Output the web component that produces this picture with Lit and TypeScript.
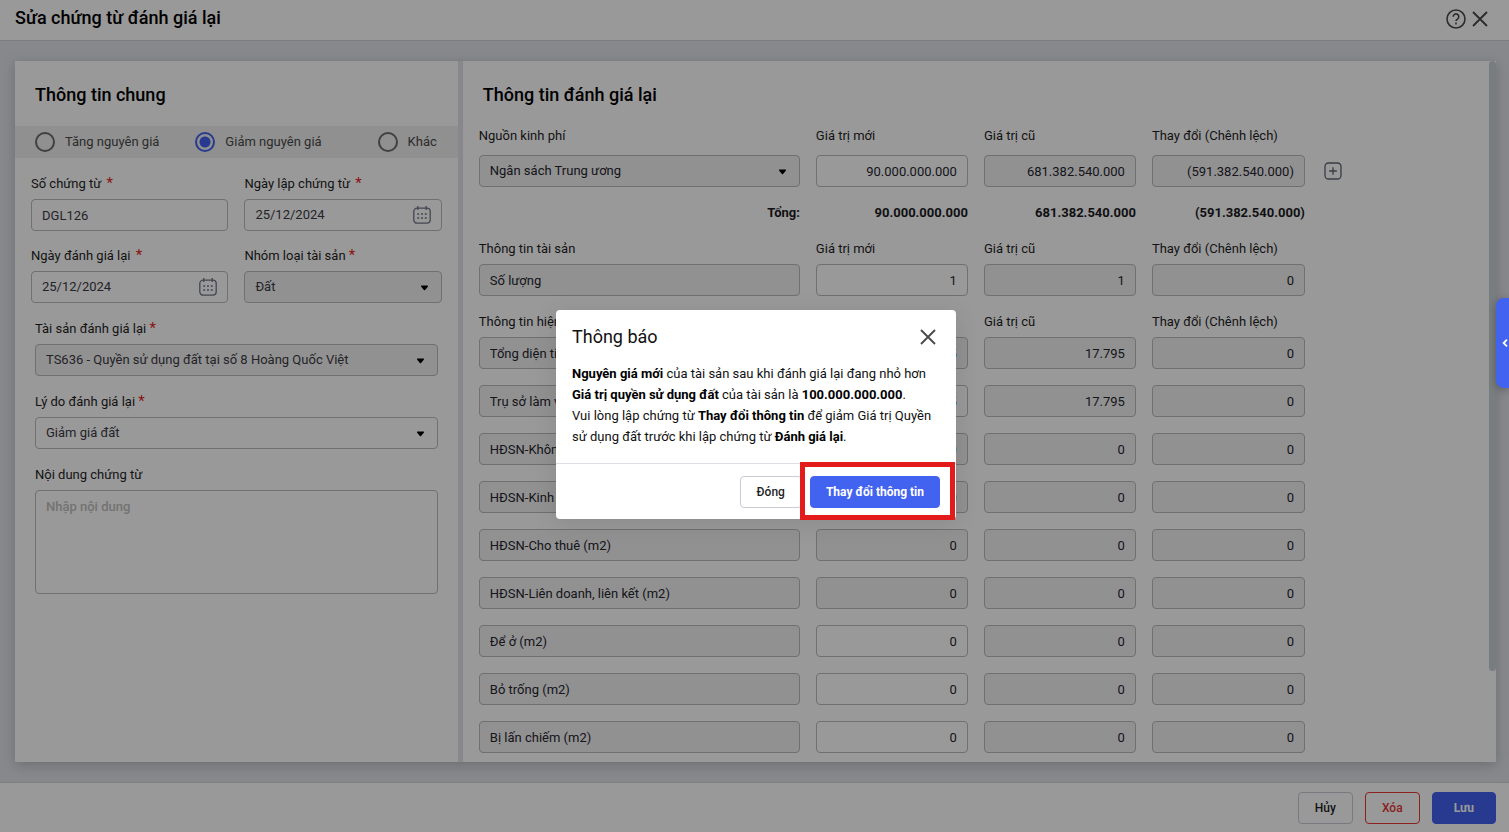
import { LitElement, html, css, svg } from "lit";
import { customElement } from "lit/decorators.js";

type Cell = { value: string; editable?: boolean; accent?: boolean };
type Row = { name: string; cells: Cell[] };

const row = (name: string, next: string, prev: string, diff: string, editable = false, accent = false): Row => ({
  name,
  cells: [{ value: next, editable, accent }, { value: prev }, { value: diff }],
});

const LAND_ROWS: Row[] = [
  row("Tổng diện tích (m2)", "17.795", "17.795", "0", false, true),
  row("Trụ sở làm việc (m2)", "17.795", "17.795", "0", true, true),
  row("HĐSN-Không kinh doanh (m2)", "0", "0", "0", false, true),
  row("HĐSN-Kinh doanh (m2)", "0", "0", "0", false, true),
  row("HĐSN-Cho thuê (m2)", "0", "0", "0"),
  row("HĐSN-Liên doanh, liên kết (m2)", "0", "0", "0"),
  row("Để ở (m2)", "0", "0", "0", true),
  row("Bỏ trống (m2)", "0", "0", "0", true),
  row("Bị lấn chiếm (m2)", "0", "0", "0", true),
];

const calendarIcon = svg`<svg width="18" height="18" viewBox="0 0 18 18" fill="none" stroke="#70758a" stroke-width="1.3">
  <rect x=".8" y="2.2" width="16.4" height="15" rx="3.4"/>
  <path d="M4.8 0v4M13.2 0v4"/>
  <path d="M4.2 8h2M8 8h2M11.8 8h2M4.2 12h2M8 12h2M11.8 12h2" stroke-width="1.6"/>
</svg>`;

const closeIcon = svg`<svg width="16" height="16" viewBox="0 0 16 16" fill="none" stroke="#4a4a4a" stroke-width="1.9">
  <path d="M1 1l14 14M15 1L1 15"/>
</svg>`;

@customElement("app-root")
export class AppRoot extends LitElement {
  static styles = css`
    :host {
      display: block;
      font-family: Roboto, "Noto Sans", sans-serif;
      font-size: 13px;
      line-height: 20px;
      color: #1f1f1f;
    }
    * { box-sizing: border-box; }
    button, input, select, textarea { font: inherit; color: inherit; margin: 0; }
    button { cursor: pointer; }
    h1, h2, p { margin: 0; font-weight: 500; }
    svg { display: block; }

    .page {
      position: relative;
      display: flex;
      flex-direction: column;
      height: 100vh;
      overflow: hidden;
      background: #e1e3e9;
    }
    .topbar {
      display: flex;
      align-items: center;
      justify-content: space-between;
      height: 41px;
      padding: 0 21px 4px 15px;
      background: #fff;
      border-bottom: 1px solid #cfcfd3;
      color: #000;
    }
    h1, h2 { font-size: 18px; line-height: 24px; color: #000; }
    .actions { display: flex; align-items: center; gap: 6px; padding-top: 2px; }
    .icon-button {
      display: flex;
      padding: 0;
      border: 0;
      background: none;
    }
    .content {
      flex: 1;
      min-height: 0;
      display: flex;
      padding: 20px 13px 20px 15px;
    }
    .panels {
      flex: 1;
      display: grid;
      grid-template-columns: 3fr 7fr;
      gap: 5px;
      box-shadow: 0 3px 12px rgba(0, 0, 0, 0.2);
      background: #e1e3e9;
      min-width: 0;
    }
    .panel { background: #fff; min-width: 0; }
    .panel h2 { padding: 22px 20px 19px; }
    .kinds {
      display: flex;
      align-items: center;
      gap: 36px;
      height: 32px;
      padding: 0 21px 0 20px;
      background: #f0f0f0;
      color: #4a4a4a;
    }
    .kinds label { display: flex; align-items: center; gap: 10px; }
    .kinds label:last-child { margin-left: auto; }
    .kinds input {
      appearance: none;
      width: 20px;
      height: 20px;
      border: 2px solid #6b6b6b;
      border-radius: 50%;
    }
    .kinds input:checked {
      border-color: #4262f0;
      background: radial-gradient(circle, #4262f0 5px, transparent 6px);
    }
    .pairs {
      display: grid;
      grid-template-columns: 1fr 1fr;
      gap: 15px 16px;
      padding: 16px 16px 0;
    }
    .singles { display: grid; gap: 16px; padding: 16px 20px 0; }
    .field { display: grid; gap: 5px; align-content: start; min-width: 0; }
    .required { color: #e61d1d; font-size: 15px; line-height: 16px; }
    .typed .required { padding-left: 2px; }
    .box {
      display: flex;
      align-items: center;
      width: 100%;
      height: 32px;
      border: 1px solid #bbb;
      border-radius: 4px;
      background: #fff;
      color: #3b3b44;
      padding: 0 10px;
      min-width: 0;
      outline: 0;
    }
    .box.muted { background: #f2f2f2; }
    .box input { flex: 1; min-width: 0; border: 0; padding: 0; background: none; outline: 0; }
    select.box { appearance: none; padding-right: 32px; }
    .select { position: relative; display: grid; }
    .caret {
      position: absolute;
      right: 13px;
      top: 14px;
      pointer-events: none;
    }
    textarea.box { display: block; height: 104px; padding: 6px 10px; resize: none; }
    textarea::placeholder { color: #c0c0c0; font-weight: 500; opacity: 1; }

    .revaluation { display: flex; align-items: flex-start; }
    .scroll { flex: 1; min-width: 0; height: 100%; overflow: hidden; }
    .thumb {
      flex: none;
      width: 7px;
      height: 87%;
      border-radius: 4px;
      background: #c9d1d6;
    }
    .grid {
      display: grid;
      grid-template-columns: 321fr 152fr 152fr 153fr 168fr;
      column-gap: 16px;
      row-gap: 16px;
      padding: 0 0 0 16px;
    }
    .group {
      grid-column: 1 / -1;
      display: grid;
      grid-template-columns: subgrid;
      row-gap: 5px;
    }
    .group.funding { row-gap: 9px; }
    input.number { text-align: right; }
    .revaluation .box { color: #262630; }
    .revaluation .box.accent { color: #1b75d0; }
    .total {
      grid-column: 1 / -1;
      display: grid;
      grid-template-columns: subgrid;
      text-align: right;
      font-weight: 700;
      color: #1b1b24;
    }
    .add { display: flex; align-items: center; padding-left: 3px; }
    .footer {
      display: flex;
      align-items: center;
      justify-content: flex-end;
      gap: 12px;
      height: 50px;
      padding: 0 13px 0 0;
      background: #fff;
      border-top: 1px solid #d4d4d8;
    }
    .button {
      height: 32px;
      padding: 0 16px;
      border: 1px solid #c9ccd6;
      border-radius: 4px;
      background: #fff;
      color: #1f1f1f;
      font-size: 12px;
      font-weight: 500;
      white-space: nowrap;
    }
    .danger { border-color: #e53935; color: #e53935; }
    .primary { padding: 0 15px; border-color: #4262f0; background: #4262f0; color: #fff; font-weight: 700; }
    .save { padding: 0 21px; }

    .backdrop {
      position: absolute;
      inset: 0;
      display: grid;
      place-items: center;
      padding: 0 0 3px 3px;
      background: rgba(0, 0, 0, 0.4);
    }
    .drawer {
      position: absolute;
      right: 0;
      top: 298px;
      display: flex;
      align-items: center;
      justify-content: flex-end;
      width: 13px;
      height: 90px;
      padding: 0 1px 0 0;
      border: 0;
      border-radius: 8px 0 0 8px;
      background: #4262f0;
      box-shadow: 0 2px 8px rgba(0, 0, 0, 0.3);
    }
    .dialog {
      width: 400px;
      border-radius: 4px;
      background: #fff;
      box-shadow: 0 4px 24px rgba(0, 0, 0, 0.1);
    }
    .dialog-head {
      display: flex;
      align-items: center;
      justify-content: space-between;
      padding: 15px 20px 14px 16px;
    }
    .dialog-head h2 { font-weight: 400; color: #111; }
    .message { padding: 0 16px 16px; line-height: 21px; color: #111; }
    .message p { font-weight: 400; }
    .message strong { font-weight: 700; color: #000; }
    .dialog-foot {
      display: flex;
      justify-content: flex-end;
      gap: 8px;
      padding: 12px 16px 11px;
      border-top: 1px solid #dcdfe3;
    }
    .highlight { position: relative; display: flex; }
    .highlight::after {
      content: "";
      position: absolute;
      inset: -14px -15px -12px -10px;
      border: 5px solid #e31b1b;
      pointer-events: none;
    }
  `;

  private caret() {
    return html`<svg class="caret" width="9" height="6" viewBox="0 0 9 6"><path d="M1.4 .5h6.2q.8.5.2 1.2L5.1 5q-.6.5-1.2 0L1.2 1.7Q.6 1 1.4.5z" fill="#000"/></svg>`;
  }

  private label(id: string, text: string, required = true) {
    return html`<label for=${id}>${text} ${required ? html`<span class="required">*</span>` : ""}</label>`;
  }

  private dateField(id: string, label: string) {
    return html`<div class="field typed">
      ${this.label(id, label)}
      <div class="box"><input id=${id} type="text" value="25/12/2024" />${calendarIcon}</div>
    </div>`;
  }

  private selectField(id: string, label: string, value: string, muted: boolean) {
    return html`<div class="field">
      ${this.label(id, label)}
      <div class="select">
        <select id=${id} class="box ${muted ? "muted" : ""}"><option>${value}</option></select>
        ${this.caret()}
      </div>
    </div>`;
  }

  private heads(first: string) {
    return html`<span>${first}</span><span>Giá trị mới</span><span>Giá trị cũ</span><span>Thay đổi (Chênh lệch)</span><span></span>`;
  }

  private cells(name: string, cells: Cell[]) {
    const titles = ["Giá trị mới", "Giá trị cũ", "Thay đổi"];
    return cells.map(
      (c, i) => html`<input
        class="box number ${c.editable ? "" : "muted"} ${c.accent ? "accent" : ""}"
        aria-label="${name} - ${titles[i]}"
        ?readonly=${!c.editable}
        .value=${c.value}
      />`,
    );
  }

  private row(r: Row) {
    return html`<input class="box muted" aria-label="Tên chỉ tiêu" readonly .value=${r.name} />
      ${this.cells(r.name, r.cells)}<span></span>`;
  }

  render() {
    return html`<div class="page">
      <header class="topbar">
        <h1>Sửa chứng từ đánh giá lại</h1>
        <div class="actions">
          <button class="icon-button" aria-label="Trợ giúp">
            <svg width="20" height="20" viewBox="0 0 20 20" fill="none" stroke="#4a4a4a" stroke-width="1.6">
              <circle cx="10" cy="10" r="9" />
              <path d="M7.2 7.8a2.8 2.8 0 1 1 4.3 2.3c-.9.6-1.5 1-1.5 2" />
              <path d="M10 13.6v1.8" />
            </svg>
          </button>
          <button class="icon-button" aria-label="Đóng">${closeIcon}</button>
        </div>
      </header>

      <main class="content">
        <div class="panels">
          <section class="panel general">
            <h2>Thông tin chung</h2>
            <div class="kinds">
              <label><input type="radio" name="kind" />Tăng nguyên giá</label>
              <label><input type="radio" name="kind" checked />Giảm nguyên giá</label>
              <label><input type="radio" name="kind" />Khác</label>
            </div>
            <div class="pairs">
              <div class="field typed">
                ${this.label("code", "Số chứng từ")}
                <input id="code" class="box" type="text" value="DGL126" />
              </div>
              ${this.dateField("created", "Ngày lập chứng từ")}
              ${this.dateField("valued", "Ngày đánh giá lại")}
              ${this.selectField("group", "Nhóm loại tài sản", "Đất", true)}
            </div>
            <div class="singles">
              ${this.selectField("asset", "Tài sản đánh giá lại", "TS636 - Quyền sử dụng đất tại số 8 Hoàng Quốc Việt", true)}
              ${this.selectField("reason", "Lý do đánh giá lại", "Giảm giá đất", false)}
              <div class="field">
                ${this.label("note", "Nội dung chứng từ", false)}
                <textarea id="note" class="box" placeholder="Nhập nội dung"></textarea>
              </div>
            </div>
          </section>

          <section class="panel revaluation">
            <div class="scroll">
              <h2>Thông tin đánh giá lại</h2>
              <div class="grid">
                <div class="group funding">
                  ${this.heads("Nguồn kinh phí")}
                  <div class="select">
                    <select class="box muted" aria-label="Nguồn kinh phí"><option>Ngân sách Trung ương</option></select>
                    ${this.caret()}
                  </div>
                  ${this.cells("Nguồn kinh phí", [
                    { value: "90.000.000.000", editable: true },
                    { value: "681.382.540.000" },
                    { value: "(591.382.540.000)" },
                  ])}
                  <div class="add">
                    <button class="icon-button" aria-label="Thêm nguồn kinh phí">
                      <svg width="18" height="18" viewBox="0 0 18 18" fill="none" stroke="#5f6575" stroke-width="1.3">
                        <rect x="1" y="1" width="16" height="16" rx="3.5" />
                        <path d="M9 5.2v7.6M5.2 9h7.6" />
                      </svg>
                    </button>
                  </div>
                </div>
                <div class="total">
                  <span>Tổng:</span><span>90.000.000.000</span><span>681.382.540.000</span><span>(591.382.540.000)</span>
                </div>
                <div class="group">
                  ${this.heads("Thông tin tài sản")}
                  ${this.row(row("Số lượng", "1", "1", "0", true))}
                </div>
                <div class="group">${this.heads("Thông tin hiện trạng")} ${this.row(LAND_ROWS[0])}</div>
                ${LAND_ROWS.slice(1).map((r) => this.row(r))}
              </div>
            </div>
            <div class="thumb"></div>
          </section>
        </div>
      </main>

      <footer class="footer">
        <button class="button">Hủy</button>
        <button class="button danger">Xóa</button>
        <button class="button primary save">Lưu</button>
      </footer>

      <div class="backdrop">
        <div class="dialog" role="dialog" aria-modal="true" aria-labelledby="notice">
          <div class="dialog-head">
            <h2 id="notice">Thông báo</h2>
            <button class="icon-button" aria-label="Đóng">${closeIcon}</button>
          </div>
          <div class="message">
            <p><strong>Nguyên giá mới</strong> của tài sản sau khi đánh giá lại đang nhỏ hơn <strong>Giá trị quyền sử dụng đất</strong> của tài sản là <strong>100.000.000.000</strong>.</p>
            <p>Vui lòng lập chứng từ <strong>Thay đổi thông tin</strong> để giảm Giá trị Quyền sử dụng đất trước khi lập chứng từ <strong>Đánh giá lại</strong>.</p>
          </div>
          <div class="dialog-foot">
            <button class="button">Đóng</button>
            <span class="highlight"><button class="button primary">Thay đổi thông tin</button></span>
          </div>
        </div>
      </div>

      <button class="drawer" aria-label="Mở bảng bên">
        <svg width="6" height="8" viewBox="0 0 6 8" fill="none" stroke="#fff" stroke-width="1.8"><path d="M5 .6L1.6 4 5 7.4" /></svg>
      </button>
    </div>`;
  }
}
